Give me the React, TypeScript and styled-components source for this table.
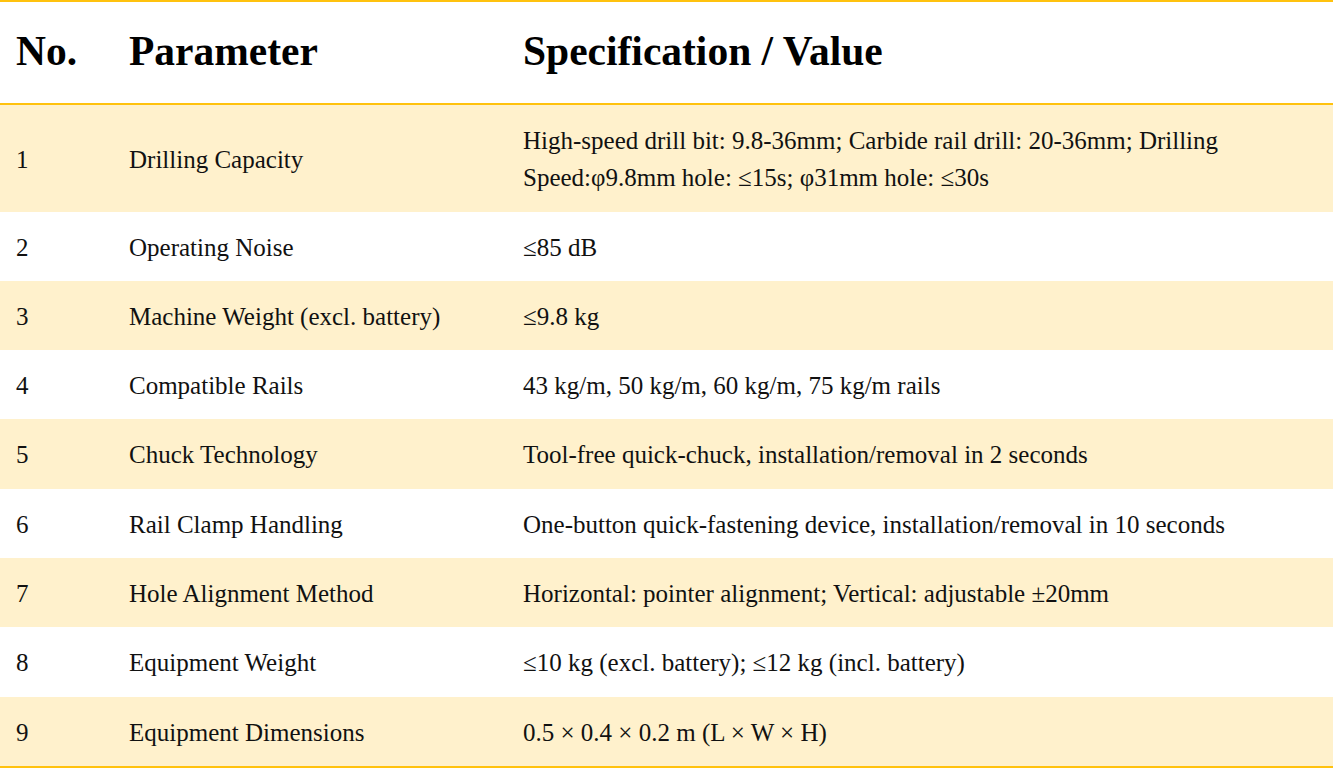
import React from "react";
import styled, { createGlobalStyle } from "styled-components";

const Global = createGlobalStyle`
  html, body { margin: 0; padding: 0; background: #ffffff; }
  body { font-family: "Liberation Serif", "Times New Roman", serif; color: #1a1a1a; }
  *, *::before, *::after { box-sizing: border-box; }
`;

const Table = styled.table`
  width: 1333px;
  border-collapse: collapse;
  table-layout: fixed;
  font-family: "Liberation Serif", "Times New Roman", serif;
  border-top: 2px solid #ffc20e;
  border-bottom: 2px solid #ffc20e;
`;

const Col = styled.col<{ $w: number }>`
  width: ${(p) => p.$w}px;
`;

const HeadCell = styled.th`
  text-align: left;
  font-size: 41.5px;
  font-weight: 700;
  line-height: 69px;
  padding: 15px 16px 17px;
  color: #000;
  border-bottom: 2px solid #ffc20e;
`;

const Row = styled.tr<{ $alt: boolean }>`
  background: ${(p) => (p.$alt ? "#fff1cc" : "#ffffff")};
`;

const Cell = styled.td`
  font-size: 25px;
  line-height: 37.3px;
  padding: 17px 16px 15px;
  vertical-align: middle;
  color: #111;
`;

const rows: [string, string, string][] = [
  ["1", "Drilling Capacity", "High-speed drill bit: 9.8-36mm; Carbide rail drill: 20-36mm; Drilling Speed:φ9.8mm hole: ≤15s; φ31mm hole: ≤30s"],
  ["2", "Operating Noise", "≤85 dB"],
  ["3", "Machine Weight (excl. battery)", "≤9.8 kg"],
  ["4", "Compatible Rails", "43 kg/m, 50 kg/m, 60 kg/m, 75 kg/m rails"],
  ["5", "Chuck Technology", "Tool-free quick-chuck, installation/removal in 2 seconds"],
  ["6", "Rail Clamp Handling", "One-button quick-fastening device, installation/removal in 10 seconds"],
  ["7", "Hole Alignment Method", "Horizontal: pointer alignment; Vertical: adjustable ±20mm"],
  ["8", "Equipment Weight", "≤10 kg (excl. battery); ≤12 kg (incl. battery)"],
  ["9", "Equipment Dimensions", "0.5 × 0.4 × 0.2 m (L × W × H)"],
];

export default function App() {
  return (
    <>
      <Global />
      <Table>
        <colgroup>
          <Col $w={113} />
          <Col $w={394} />
          <Col $w={826} />
        </colgroup>
        <thead>
          <tr>
            <HeadCell>No.</HeadCell>
            <HeadCell>Parameter</HeadCell>
            <HeadCell>Specification / Value</HeadCell>
          </tr>
        </thead>
        <tbody>
          {rows.map((r, i) => (
            <Row key={r[0]} $alt={i % 2 === 0}>
              <Cell>{r[0]}</Cell>
              <Cell>{r[1]}</Cell>
              <Cell>{r[2]}</Cell>
            </Row>
          ))}
        </tbody>
      </Table>
    </>
  );
}
